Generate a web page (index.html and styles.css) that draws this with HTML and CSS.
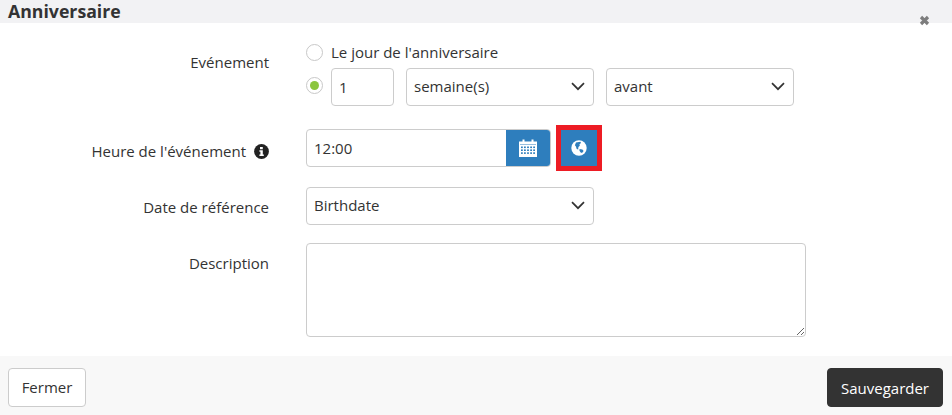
FILE: index.html
```html
<!DOCTYPE html>
<html lang="fr">
<head>
<meta charset="utf-8">
<title>Anniversaire</title>
<link rel="stylesheet" href="styles.css">
</head>
<body>
<div class="modal">
  <header class="head">
    <h1 class="title">Anniversaire</h1>
    <span class="close">
      <svg width="11" height="11" viewBox="0 0 11 11"><path d="M2 2l7 7M9 2l-7 7" stroke="#7d7d7d" stroke-width="3.2" fill="none"/></svg>
    </span>
  </header>
  <main class="form">
    <div class="row row-event">
      <div class="label label-event">Evénement</div>
      <div class="control stack">
        <div class="radio-line line-one">
          <span class="radio"></span>
          <span class="radio-text">Le jour de l'anniversaire</span>
        </div>
        <div class="radio-line line-two">
          <span class="radio radio-on"></span>
          <div class="field num">1</div>
          <div class="field select w188">semaine(s)<svg class="chev" width="14" height="9" viewBox="0 0 14 9"><path d="M1 1.2l6 6 6-6" stroke="#333" stroke-width="1.7" fill="none"/></svg></div>
          <div class="field select w188">avant<svg class="chev" width="14" height="9" viewBox="0 0 14 9"><path d="M1 1.2l6 6 6-6" stroke="#333" stroke-width="1.7" fill="none"/></svg></div>
        </div>
      </div>
    </div>
    <div class="row row-time">
      <div class="label label-time">Heure de l'événement
        <svg class="info" width="15" height="15" viewBox="0 0 15 15"><circle cx="7.5" cy="7.5" r="7.4" fill="#222"/><path d="M6 3h2.8v2.2H6zM5.4 6.2h3.4v4.3h1v1.6H5.4v-1.6h1V7.8h-1z" fill="#fff"/></svg>
      </div>
      <div class="control time">
        <div class="field time-field">
          <span class="time-value">12:00</span>
          <span class="cal">
            <svg width="20" height="18" viewBox="0 0 20 18"><path fill="#fff" d="M1 2.5h3.5V.5h2v2h7v-2h2v2H19V18H1z"/><path fill="#2e7ebd" d="M2 5.4h16v.7H2z"/><g fill="#2e7ebd"><rect x="3" y="7.5" width="1.8" height="1.6"/><rect x="6" y="7.5" width="1.8" height="1.6"/><rect x="9.1" y="7.5" width="1.8" height="1.6"/><rect x="12.2" y="7.5" width="1.8" height="1.6"/><rect x="15.2" y="7.5" width="1.8" height="1.6"/><rect x="3" y="10.4" width="1.8" height="1.6"/><rect x="6" y="10.4" width="1.8" height="1.6"/><rect x="9.1" y="10.4" width="1.8" height="1.6"/><rect x="12.2" y="10.4" width="1.8" height="1.6"/><rect x="15.2" y="10.4" width="1.8" height="1.6"/><rect x="3" y="13.3" width="1.8" height="1.6"/><rect x="6" y="13.3" width="1.8" height="1.6"/><rect x="9.1" y="13.3" width="1.8" height="1.6"/><rect x="12.2" y="13.3" width="1.8" height="1.6"/><rect x="15.2" y="13.3" width="1.8" height="1.6"/></g></svg>
          </span>
        </div>
        <button class="globe" type="button">
          <svg width="16" height="16" viewBox="0 0 16 16"><circle cx="8" cy="8" r="7.7" fill="#fff"/><path fill="#2e7ebd" d="M5 2.4l4.4-.6.6 1.2-1.5 1.2.3 1.6-1.4 1.2-.2 2.4-1.5-.4-.8-2.6-1-1.2zM8.6 9l2.8.4 1.2 1.6-1.6 2-1.6-.8-1-1.8z"/></svg>
        </button>
      </div>
    </div>
    <div class="row row-date">
      <div class="label label-date">Date de référence</div>
      <div class="control">
        <div class="field select w288">Birthdate<svg class="chev" width="14" height="9" viewBox="0 0 14 9"><path d="M1 1.2l6 6 6-6" stroke="#333" stroke-width="1.7" fill="none"/></svg></div>
      </div>
    </div>
    <div class="row row-desc">
      <div class="label label-desc">Description</div>
      <div class="control">
        <textarea class="desc" aria-label="Description"></textarea>
      </div>
    </div>
  </main>
  <footer class="foot">
    <button class="btn btn-light" type="button">Fermer</button>
    <button class="btn btn-dark" type="button">Sauvegarder</button>
  </footer>
</div>
</body>
</html>
```
FILE: styles.css
```css
* { box-sizing: border-box; }
html, body { margin: 0; padding: 0; }
body {
  width: 952px;
  height: 415px;
  overflow: hidden;
  background: #fff;
  font-family: "Open Sans", sans-serif;
  font-size: 15px;
  color: #333;
}
.modal { display: flex; flex-direction: column; height: 415px; }
.head {
  height: 23px;
  background: #f2f2f4;
  position: relative;
  padding-left: 8px;
}
.title {
  margin: 0;
  font-size: 17.7px;
  line-height: 22px;
  font-weight: 700;
  color: #333;
}
.close {
  position: absolute;
  left: 919px;
  top: 15px;
  width: 11px;
  height: 11px;
  display: block;
}
.close svg { display: block; }
.form { flex: 1; display: flex; flex-direction: column; padding-top: 19px; }
.row { display: flex; }
.label {
  width: 269px;
  text-align: right;
  line-height: 20px;
  color: #333;
}
.control { margin-left: 37px; }
.row-event { height: 64px; margin-bottom: 23px; }
.row-time { height: 38px; margin-bottom: 20px; }
.row-date { height: 38px; margin-bottom: 18px; }
.label-event { padding-top: 10px; }
.label-time { padding-top: 12px; display: flex; justify-content: flex-end; align-items: center; height: 32px; gap: 8px; }
.label-date { padding-top: 10px; }
.label-desc { padding-top: 10px; }
.stack { display: flex; flex-direction: column; }
.radio-line { display: flex; }
.line-one { height: 20px; margin-bottom: 6px; align-items: center; }
.line-two { height: 38px; align-items: flex-start; }
.radio {
  width: 17px;
  height: 17px;
  border: 1px solid #c8c8c8;
  border-radius: 50%;
  background: #fff;
  flex: none;
  display: flex;
  align-items: center;
  justify-content: center;
}
.radio-on { margin-top: 9px; }
.radio-on::after {
  content: "";
  width: 9px;
  height: 9px;
  border-radius: 50%;
  background: #8cc63f;
}
.radio-text { margin-left: 8px; }
.field {
  height: 38px;
  border: 1px solid #ccc;
  border-radius: 4px;
  background: #fff;
  display: flex;
  align-items: center;
  padding-left: 7px;
  color: #333;
}
.num { width: 63px; margin-left: 8px; }
.select { justify-content: space-between; padding: 0 8px 2px 7px; }
.w188 { width: 188px; margin-left: 12px; }
.w288 { width: 288px; }
.time { display: flex; align-items: flex-start; }
.time-field { width: 245px; padding: 0 0 0 7px; justify-content: space-between; overflow: hidden; }
.cal {
  width: 44px;
  height: 36px;
  background: #2e7ebd;
  display: flex;
  align-items: center;
  justify-content: center;
}
.globe {
  width: 46px;
  height: 46px;
  margin: -4px 0 0 5px;
  border: 5px solid #ed1c24;
  background: #2e7ebd;
  padding: 0;
  display: flex;
  align-items: center;
  justify-content: center;
}
.desc {
  display: block;
  width: 500px;
  height: 94px;
  border: 1px solid #ccc;
  border-radius: 4px;
  background: #fff;
  margin: 0;
  padding: 6px 8px;
  font: inherit;
}
.foot {
  height: 59px;
  background: #f8f8f8;
  display: flex;
  justify-content: space-between;
  align-items: flex-start;
  padding: 12px 9px 0 8px;
}
.btn {
  height: 39px;
  border-radius: 4px;
  font-family: inherit;
  font-size: 15px;
  padding: 0;
}
.btn-light { width: 78px; background: #fff; border: 1px solid #ccc; color: #333; padding-bottom: 2px; }
.btn-dark { width: 116px; background: #333; border: 1px solid #333; color: #fff; }
```
